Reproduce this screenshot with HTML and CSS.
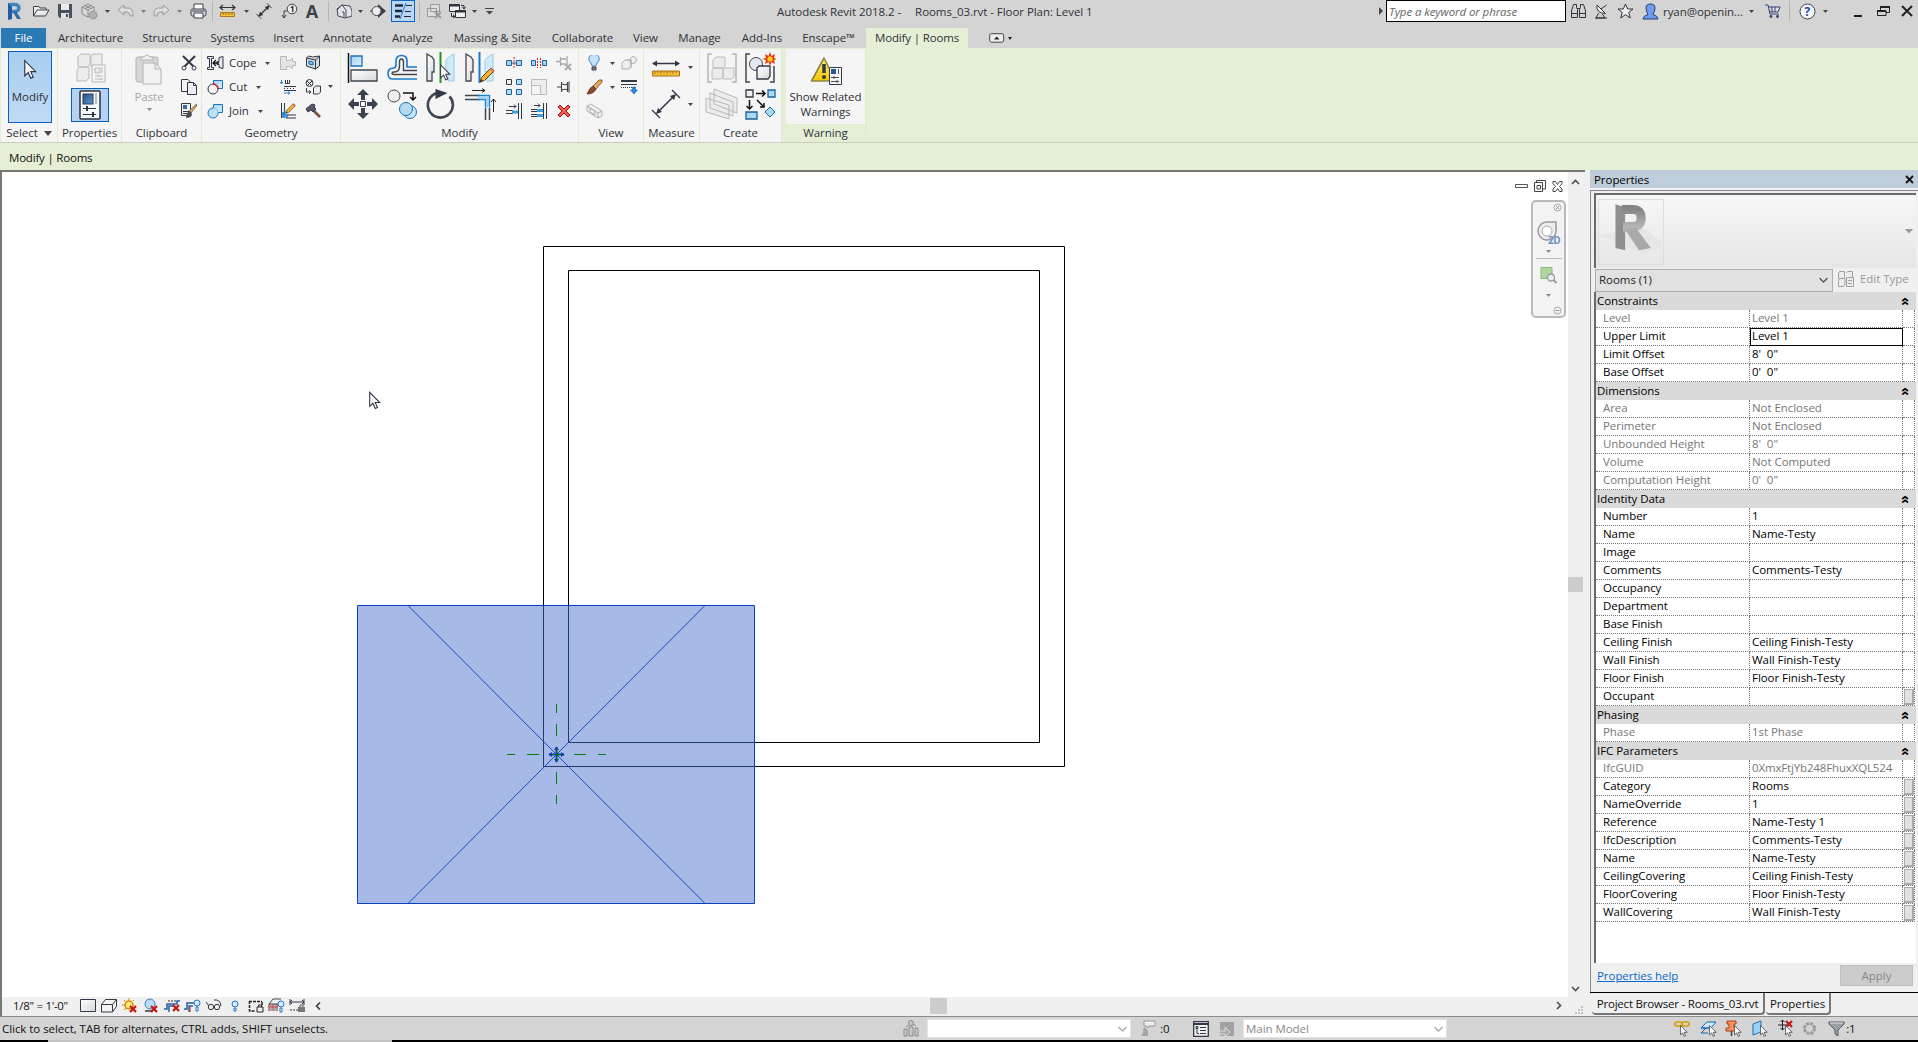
FILE: index.html
```html
<!DOCTYPE html>
<html lang="en">
<head>
<meta charset="utf-8">
<title>Autodesk Revit 2018.2 - Rooms_03.rvt - Floor Plan: Level 1</title>
<link rel="stylesheet" href="styles.css">
</head>
<body>
<svg class="defs" width="0" height="0">
  <defs>
    <linearGradient id="gBox" x1="0" y1="0" x2="1" y2="1"><stop offset="0" stop-color="#fff"/><stop offset="1" stop-color="#d5d8dd"/></linearGradient>
    <linearGradient id="gBlue" x1="0" y1="0" x2="1" y2="1"><stop offset="0" stop-color="#a4d3f0"/><stop offset="1" stop-color="#d8f0fb"/></linearGradient>
    <linearGradient id="gNavy" x1="0" y1="0" x2="1" y2="1"><stop offset="0" stop-color="#2a4d7c"/><stop offset="1" stop-color="#5d9bd0"/></linearGradient>
    <linearGradient id="gWarn" x1="0" y1="0" x2="0" y2="1"><stop offset="0" stop-color="#fff27a"/><stop offset="1" stop-color="#f5c400"/></linearGradient>
    <linearGradient id="gGrey" x1="0" y1="0" x2="0" y2="1"><stop offset="0" stop-color="#858585"/><stop offset="1" stop-color="#b5b5b5"/></linearGradient>
  </defs>
  <symbol id="caret" viewBox="0 0 5 3"><path d="M0 0h5L2.500 3z" fill="#444"/></symbol>
  <symbol id="ptr" viewBox="0 0 12 18"><path d="M.7.8v14l3.200-3 2.300 5.200 2.300-1-2.300-5h4.600z" fill="#fff" stroke="#333846" stroke-width="1.100"/></symbol>
  <symbol id="redx" viewBox="0 0 8 8"><path d="M1 1l6 6M7 1L1 7" stroke="#c41414" stroke-width="2.200"/></symbol>
  <symbol id="pencil" viewBox="0 0 16 16"><path d="M1 15l1.500-4.500L12 1l3 3-9.500 9.500z" fill="#f5b52a" stroke="#5a4020"/><path d="M11 2l3 3 1.500-1.500-3-3z" fill="#d06a5a"/><path d="M1 15l1-3 2 2z" fill="#333"/></symbol>
  <symbol id="pairs" viewBox="0 0 32 32"><g fill="#ececec" stroke="#b9b9b9"><path d="M4 5l3-3h9v10l-3 3H4zM17 5l2-3h9v10l-2 3h-9zM3 18l3-3h9v11l-3 3H3z"/><path d="M18 13h13v17H18z" fill="#f4f4f4"/><path d="M21 16h5v5h-5z"/><path d="M28 15v6M21 24h8M21 27h8M24 23v2M27 26v2"/></g></symbol>
</svg>

<div class="app">
  <header class="titlebar">
    <div class="qat">
      <svg width="18" height="20" viewBox="0 0 18 20"><path d="M3 2l4 1v15l-4 1z" fill="#1d5c9e"/><path d="M5 3.500h5a4 3.500 0 010 7H7" fill="none" stroke="#3f83c2" stroke-width="3.600"/><path d="M8 11l3-1 5 8h-4z" fill="#2b6cae"/></svg>
      <svg width="18" height="16" viewBox="0 0 18 16"><path d="M1.500 13V3.500H7l1 1.500h6v2" fill="#eee" stroke="#3c4048"/><path d="M1.500 13L5 7h12l-3.500 6z" fill="url(#gBox)" stroke="#3c4048"/></svg>
      <svg width="16" height="16" viewBox="0 0 16 16"><path d="M1 1h14v14H3l-2-2z" fill="#4a515d"/><path d="M4 1h8v6H4z" fill="#e8eaee"/><path d="M4 10h8v5H4z" fill="#dfe2e6"/><path d="M9 11h2v3H9z" fill="#4a515d"/></svg>
      <svg width="17" height="17" viewBox="0 0 17 17"><g fill="#d9d9d9" stroke="#8c8c8c"><path d="M1 4l6-3 6 3v7l-6 3-6-3z"/><path d="M1 4l6 3 6-3M7 7v7M4 2.500l6 3M10 2.500l-6 3"/></g><circle cx="12" cy="12" r="4" fill="#b0b0b0" stroke="#888" stroke-dasharray="2 1"/></svg>
      <svg class="caret"><use href="#caret"/></svg>
      <svg width="17" height="14" viewBox="0 0 17 14"><path d="M1 6l6-5v3h5q4 0 4 8h-3q0-4-3-4H7v3z" fill="#dedede" stroke="#999"/></svg>
      <svg class="caret dim"><use href="#caret"/></svg>
      <svg width="17" height="14" viewBox="0 0 17 14"><path d="M16 6l-6-5v3H5q-4 0-4 8h3q0-4 3-4h3v3z" fill="#dedede" stroke="#999"/></svg>
      <svg class="caret dim"><use href="#caret"/></svg>
      <svg width="17" height="16" viewBox="0 0 17 16"><path d="M4 6V1h9v5" fill="#fff" stroke="#3c4048"/><rect x="1" y="6" width="15" height="7" rx="1.500" fill="#d6d9de" stroke="#3c4048"/><path d="M4 10h9v5H4z" fill="#fff" stroke="#3c4048"/><path d="M2 8h13" stroke="#3c4048"/></svg>
      <i class="sep"></i>
      <svg width="17" height="14" viewBox="0 0 17 14"><path d="M1 3.500h15M4 1L1 3.500 4 6M13 1l3 2.500L13 6" fill="none" stroke="#333" stroke-width="1.200"/><path d="M1.500 8.500h14v4h-14z" fill="#f7c544" stroke="#b07a10"/><path d="M4 9v2M7 9v2M10 9v2M13 9v2" stroke="#8a5d08"/></svg>
      <svg class="caret"><use href="#caret"/></svg>
      <svg width="16" height="16" viewBox="0 0 16 16"><path d="M3 13L13 3" stroke="#333" stroke-width="1.300"/><path d="M2.500 13.500L4 8.800l3.200 3.200zM13.500 2.500L12 7.200 8.800 4z" fill="#333"/><path d="M.5 11l4.500 4.500M11 .5L15.500 5" stroke="#333"/></svg>
      <svg width="17" height="16" viewBox="0 0 17 16"><circle cx="11" cy="6" r="4.800" fill="#eee" stroke="#3c4048"/><text x="9" y="9" class="tiny">1</text><path d="M6 8H3v7M1 12l2 3 2-3" fill="none" stroke="#3c4048"/></svg>
      <b class="bigA">A</b>
      <i class="sep"></i>
      <svg width="16" height="16" viewBox="0 0 16 16"><path d="M1 6l5-4 8 1 2 5v5l-7 2-7-2z" fill="#e2e4e8" stroke="#454a55"/><path d="M1 7l5-5 4 5v8M6 9h2v5" fill="none" stroke="#454a55"/></svg>
      <svg class="caret"><use href="#caret"/></svg>
      <svg width="17" height="16" viewBox="0 0 17 16"><path d="M8 1l8 7-8 7z" fill="#3c4048"/><circle cx="6.500" cy="8" r="4.500" fill="#eee" stroke="#3c4048"/><path d="M0 8h2" stroke="#3c4048"/></svg>
      <span class="thin"><svg width="20" height="18" viewBox="0 0 20 18"><path d="M2 3.500h8M2 9h7M2 14.500h5" stroke="#222833" stroke-width="2.500"/><path d="M13 3.500h6M12 9.500h6M11 14.500h7" stroke="#222833"/><path d="M13 1L7 17" stroke="#1979ce"/></svg></span>
      <i class="sep"></i>
      <svg width="16" height="16" viewBox="0 0 16 16"><path d="M4.500 1.500h9v7h-9zM1.500 5.500h9v8h-9z" fill="#ddd" stroke="#999"/><path d="M9 9l6 6M15 9l-6 6" stroke="#999" stroke-width="2"/></svg>
      <svg width="17" height="16" viewBox="0 0 17 16"><path d="M.5 1.500h10v7H.5zM6.500 7.500h10v7h-10z" fill="#f2f2f2" stroke="#30343c"/><path d="M6 8.500h11M0 2.500h11" stroke="#30343c" stroke-width="2"/><path d="M12 2.500h3v3M13.500 4l1.500 2 1.500-2M2.500 10v3.500h3M4 12l2 1.500L4 15" fill="none" stroke="#30343c"/></svg>
      <svg class="caret"><use href="#caret"/></svg>
      <svg width="9" height="7" viewBox="0 0 9 7"><path d="M0 .5h9" stroke="#444"/><path d="M1 3h7L4.500 6.500z" fill="#444"/></svg>
    </div>
    <div class="wintitle"><span>Autodesk Revit 2018.2 -</span><span class="doc">Rooms_03.rvt - Floor Plan: Level 1</span></div>
    <div class="infocenter">
      <svg width="4" height="8" viewBox="0 0 4 8"><path d="M0 0l4 4-4 4z" fill="#444"/></svg>
      <div class="search">Type a keyword or phrase</div>
      <svg width="17" height="16" viewBox="0 0 17 16"><g fill="#d5d5d5" stroke="#30343c"><path d="M3.500 1.500h3v3l1 2v8h-6V8zM10.500 1.500h3L15.500 8v6.500h-6v-8l1-2z"/><path d="M7 5.500h3M1.500 10.500h6M9.500 10.500h6"/></g></svg>
      <svg width="16" height="16" viewBox="0 0 16 16"><path d="M4.500 10l-2.500 5h9l-2.500-4" fill="#ccc" stroke="#30343c"/><path d="M3 2q-1.500 8 8.500 8.500z" fill="#f5f5f5" stroke="#30343c"/><path d="M7 6l5.500-4M1 15h12" stroke="#30343c"/></svg>
      <svg width="17" height="16" viewBox="0 0 17 16"><path d="M8.500 1l2.200 5H16l-4.300 3.500 1.600 5.500-4.800-3.300L3.700 15l1.600-5.500L1 6h5.300z" fill="#eee" stroke="#30343c"/></svg>
      <svg width="17" height="17" viewBox="0 0 17 17"><path d="M1 16q0-3 5-4.500Q4 8 4 5q0-4 4.500-4T13 5q0 3-2 6.500 5 1.500 5 4.500z" fill="#6f9cf2" stroke="#2b3c6b"/></svg>
      <span class="user">ryan@openin...</span>
      <svg class="caret"><use href="#caret"/></svg>
      <svg width="17" height="16" viewBox="0 0 17 16"><path d="M1 2h3l2 9h9M4 4h12l-2 5H5.500" fill="#e0e4ee" stroke="#34406b"/><path d="M8 4v5M11 4v5" stroke="#34406b"/><circle cx="7" cy="13.500" r="1.400" fill="#34406b"/><circle cx="13.500" cy="13.500" r="1.400" fill="#34406b"/></svg>
      <i class="sep"></i>
      <svg width="17" height="17" viewBox="0 0 17 17"><circle cx="8.500" cy="8.500" r="7.500" fill="#f3f5f9" stroke="#40454f"/><text x="5.500" y="13" class="help">?</text></svg>
      <svg class="caret"><use href="#caret"/></svg>
      <svg class="min" width="8" height="12" viewBox="0 0 8 12"><path d="M0 11h8" stroke="#222" stroke-width="2"/></svg>
      <svg width="13" height="12" viewBox="0 0 13 12"><path d="M3.500 5V1.500h9v6H9M.5 5.500H9v5H.5z" fill="none" stroke="#222"/><path d="M3 2h10M0 6h9" stroke="#222" stroke-width="2"/></svg>
      <svg width="12" height="12" viewBox="0 0 12 12"><path d="M1 1l10 10M11 1L1 11" stroke="#222" stroke-width="2"/></svg>
    </div>
  </header>

  <nav class="tabs">
    <span class="file">File</span><span>Architecture</span><span>Structure</span><span>Systems</span><span>Insert</span><span>Annotate</span><span>Analyze</span><span>Massing &amp; Site</span><span>Collaborate</span><span>View</span><span>Manage</span><span>Add-Ins</span><span class="last">Enscape™</span><span class="active">Modify | Rooms</span>
    <svg width="24" height="10" viewBox="0 0 24 10"><rect x=".7" y=".7" width="14" height="8.500" rx="2" fill="#eee" stroke="#444"/><path d="M5 6.500h5.500L7.700 3.500z" fill="#222"/><path d="M19 4h4l-2 3z" fill="#222"/></svg>
  </nav>

  <div class="ribbon">
    <section class="panel p-select">
      <div class="body"><div class="modify"><svg width="13" height="21"><use href="#ptr"/></svg><span>Modify</span></div></div>
      <div class="label">Select <svg width="8" height="5" viewBox="0 0 8 5"><path d="M0 0h8L4 5z" fill="#444"/></svg></div>
    </section>
    <section class="panel p-props">
      <div class="body">
        <svg width="32" height="32"><use href="#pairs"/></svg>
        <span class="on"><svg width="22" height="30" viewBox="0 0 22 30"><rect x="1" y="1" width="20" height="28" rx="1" fill="#f7f8fa" stroke="#2d3340" stroke-width="1.500"/><rect x="4" y="4" width="10" height="10" fill="url(#gNavy)" stroke="#23395c"/><path d="M17 3v11" stroke="#b5b9c0" stroke-width="2"/><path d="M4 18.500h13M4 24.500h13" stroke="#2d3340"/><path d="M8 16v5M14 22v5" stroke="#2d3340" stroke-width="2"/></svg></span>
      </div>
      <div class="label">Properties</div>
    </section>
    <section class="panel p-clip">
      <div class="body">
        <div class="paste"><svg width="28" height="31" viewBox="0 0 28 31"><rect x="1" y="3" width="22" height="25" rx="2" fill="#d7d7d7" stroke="#b3b3b3"/><path d="M6 6V3h3q3-4 6 0h3v3z" fill="#eee" stroke="#b3b3b3"/><path d="M8 9h12l6 6v15H8z" fill="#f1f1f1" stroke="#b3b3b3"/><path d="M20 9v6h6" fill="none" stroke="#b3b3b3"/></svg><span>Paste</span><svg class="caret dim"><use href="#caret"/></svg></div>
        <div class="stack">
          <svg width="16" height="16" viewBox="0 0 16 16"><path d="M2 1l11 11M14 1L3 12" stroke="#333846" stroke-width="2"/><circle cx="3" cy="13" r="2" fill="#f5f5f5" stroke="#333846"/><circle cx="13" cy="13" r="2" fill="#f5f5f5" stroke="#333846"/></svg>
          <svg width="16" height="16" viewBox="0 0 16 16"><path d="M.5.500H7l3 3v9H.5z" fill="#f5f5f5" stroke="#333846"/><path d="M6.500 3.500h6l3 3v9h-9z" fill="#eceef1" stroke="#333846"/><path d="M12.500 3.500v3h3" fill="none" stroke="#333846"/></svg>
          <svg width="16" height="16" viewBox="0 0 16 16"><path d="M.5.500h9v12h-9z" fill="#f3f3f3" stroke="#333846"/><path d="M2 2h4v4H2z" fill="#3a6ba8"/><path d="M2 8.500h6M2 10.500h5" stroke="#333846"/><path d="M15.500 1L8 8l2 2 5.500-7z" fill="#e1ad6d" stroke="#61452a" stroke-width=".7"/><path d="M9 8q-4 1-4 7 6 0 6-4z" fill="#4d4f55"/></svg>
        </div>
      </div>
      <div class="label">Clipboard</div>
    </section>
    <section class="panel p-geom">
      <div class="body">
        <div class="stack text">
          <div><svg width="17" height="16" viewBox="0 0 17 16"><path d="M.5 1.500h6v2h-2v9h2v2h-6v-2h2v-9h-2zM16 1.500l-4 1v4h-2v3h2v3l4 1z" fill="#e5e7ea" stroke="#333846"/><path d="M12 8H6M9 5L6 8l3 3" fill="none" stroke="#111" stroke-width="1.300"/></svg><span>Cope</span><svg class="caret"><use href="#caret"/></svg></div>
          <div><svg width="17" height="16" viewBox="0 0 17 16"><path d="M6.500 1.500h9v8h-9z" fill="url(#gBlue)" stroke="#1c71b8"/><circle cx="6" cy="10" r="5" fill="#f5f5f5" stroke="#333846"/><path d="M6 5a5 5 0 015 5" fill="none" stroke="#f01818" stroke-width="1.500"/></svg><span>Cut</span><svg class="caret"><use href="#caret"/></svg></div>
          <div><svg width="17" height="16" viewBox="0 0 17 16"><path d="M6.500 1.500h9v8H11a5 5 0 11-4.500-4.500z" fill="url(#gBlue)" stroke="#1c71b8"/><path d="M6 5a5 5 0 015 5" fill="none" stroke="#8ac0e4"/></svg><span>Join</span><svg class="caret"><use href="#caret"/></svg></div>
        </div>
        <div class="stack">
          <svg width="16" height="16" viewBox="0 0 16 16"><path d="M.5 1.500h6v4h3l3-2v3h3v4h-3v3l-3-2h-3v3h-6z" fill="#e4e4e4" stroke="#b8b8b8"/></svg>
          <svg width="16" height="16" viewBox="0 0 16 16"><path d="M1.500 5V1M0 3l1.500 2L3 3M4 14h6M8 12.500l2 1.500-2 1.500" fill="none" stroke="#2488dd"/><path d="M5.500 1v3.500h4V1M7.500 1v3.500M4 7.500h12M4 11.500h12" fill="none" stroke="#333846"/><path d="M4 9.500h12" stroke="#333846" stroke-dasharray="1 2"/></svg>
          <svg width="16" height="16" viewBox="0 0 16 16"><path d="M1.500 0v15M4.500 0v6M6 15h10M7 12h9" fill="none" stroke="#333846"/><path d="M4.500 6v6h4M3 9v5h5" fill="none" stroke="#1979ce" stroke-width="1.500"/><use href="#pencil" x="5" y="0" width="11" height="11"/></svg>
        </div>
        <div class="stack">
          <svg width="16" height="16" viewBox="0 0 16 16"><path d="M1.500 3l2-2 4 1 7-1v10l-4 3-9-3z" fill="#d5d9df" stroke="#333846"/><path d="M1.500 3l9 2v9M10.500 5l4-4" fill="none" stroke="#333846"/><path d="M4 6l4 1v3l-4-1z" fill="#7dc4f3" stroke="#1465ac"/></svg>
          <svg width="16" height="16" viewBox="0 0 16 16"><circle cx="4.500" cy="4" r="3.500" fill="#eee" stroke="#333846"/><path d="M2 2l5 5M7 2L2 7M1.500 9v4h4M4 11.500l2 1.500-2 2" fill="none" stroke="#333846"/><path d="M8.500 9l2-2h5v6l-2 2h-5z" fill="#eee" stroke="#333846"/></svg>
          <svg width="16" height="16" viewBox="0 0 16 16"><path d="M7 6l8 8" stroke="#7e4b3c" stroke-width="2.600"/><path d="M1 6l6-5 3 1-1 2 2 2-3 3-2-2-3 2z" fill="#555a64" stroke="#333846"/></svg>
        </div>
        <svg class="caret mid"><use href="#caret"/></svg>
      </div>
      <div class="label">Geometry</div>
    </section>
    <section class="panel p-modify">
      <div class="body">
        <div class="large four">
          <svg width="32" height="32" viewBox="0 0 32 32"><path d="M1.500 1v30" stroke="#111" stroke-width="1.500"/><path d="M4 4h11v10H4z" fill="url(#gBlue)" stroke="#1c71b8" stroke-width="1.300"/><path d="M4 18h26v11H4z" fill="url(#gBox)" stroke="#40454f" stroke-width="1.300"/></svg>
          <svg width="32" height="32" viewBox="0 0 32 32"><path d="M31 27H7q-5 0-5-5.500T7.500 16q2.500 0 2.500-3V9q0-5.500 5.500-5.500T21 9v6h10" fill="none" stroke="#1979ce" stroke-width="1.600"/><path d="M31 22.500H8q-2 0-2-1.200t2-1.300q5.500 0 5.500-6V10q0-3 2-3t2 3v8.500H31" fill="none" stroke="#40454f" stroke-width="1.400"/></svg>
          <svg width="32" height="32" viewBox="0 0 32 32"><path d="M2 2l5 3 2 3v12H7v9H2z" fill="url(#gBox)" stroke="#40454f" stroke-width="1.300"/><path d="M29 2l-5 3-3 3v12h2v9h6z" fill="#cfeafa" stroke="#9acbe5"/><path d="M15.500 0v31" stroke="#1d9a1d" stroke-width="2"/><use href="#ptr" x="15" y="12" width="11" height="17"/></svg>
          <svg width="32" height="32" viewBox="0 0 32 32"><path d="M2 2l5 3 2 3v12H7v9H2z" fill="url(#gBox)" stroke="#40454f" stroke-width="1.300"/><path d="M29 2l-5 3-3 3v12h2v9h6z" fill="#cfeafa" stroke="#9acbe5"/><path d="M15.500 0v31" stroke="#1979ce" stroke-width="2"/><use href="#pencil" x="15" y="15" width="16" height="16"/></svg>
          <svg width="32" height="32" viewBox="0 0 32 32"><path d="M16 1l6 6h-4v5h-4V7h-4zM16 31l6-6h-4v-5h-4v5h-4zM1 16l6-6v4h5v4H7v4zM31 16l-6-6v4h-5v4h5v4z" fill="#3c4350"/><path d="M13.500 13.500h5v5h-5z" fill="#fff" stroke="#3c4350"/></svg>
          <svg width="32" height="32" viewBox="0 0 32 32"><circle cx="8" cy="8" r="6" fill="#eee" stroke="#40454f"/><path d="M17 5h10v6M24 9l3 3 3-3" fill="none" stroke="#111" stroke-width="1.500"/><circle cx="24" cy="24" r="6.500" fill="#c8e6f7" stroke="#1c71b8"/><circle cx="20" cy="21" r="6.500" fill="#b5dcf2" stroke="#1c71b8"/></svg>
          <svg width="32" height="32" viewBox="0 0 32 32"><path d="M24.500 8.500A12.500 12.500 0 1112 5" fill="none" stroke="#40454f" stroke-width="2.600"/><path d="M10.500 1l12 4-12 6z" fill="#333846"/></svg>
          <svg width="32" height="32" viewBox="0 0 32 32"><path d="M1 7.500h15M1 11.500h15M21.500 20v12M25.500 20v12" stroke="#40454f" stroke-width="1.500"/><path d="M14 7.500h11.500v12M14 11.500h7.500v8" fill="none" stroke="#1c83d8" stroke-width="1.400"/><path d="M14 9.500h9.500v10" fill="none" stroke="#9fd0f5" stroke-width="2.500"/><path d="M8 2.500h13M18 .5l3 2-3 2M29.500 24V11M27 14l2.500-3 2.500 3" fill="none" stroke="#222"/></svg>
        </div>
        <div class="small three">
          <svg width="16" height="16" viewBox="0 0 16 16"><path d="M.5 5.500h5v5h-5zM10.500 5.500h5v5h-5z" fill="#a6d5f1" stroke="#1b629d"/><path d="M5 8h6" stroke="#1b629d"/><path d="M8 2v12" stroke="#d22" stroke-dasharray="2 1"/></svg>
          <svg width="16" height="16" viewBox="0 0 16 16"><path d="M.5 5.500h4v5h-4zM11.500 5.500h4v5h-4z" fill="#a6d5f1" stroke="#1b629d"/><path d="M6.500 3v10M9.500 3v10" stroke="#d22" stroke-dasharray="2 1"/></svg>
          <svg width="16" height="16" viewBox="0 0 16 16"><path d="M0 6.500h4M4.500 2v9M5 4h5M5 9h5M11 1v9" fill="none" stroke="#aaa" stroke-width="1.300"/><path d="M9 9l6 6M15 9l-6 6" stroke="#aaa" stroke-width="2"/></svg>
          <svg width="16" height="16" viewBox="0 0 16 16"><path d="M.5.500h5v5h-5z" fill="#eee" stroke="#333846"/><path d="M10.500.500h5v5h-5zM.5 10.500h5v5h-5zM10.500 10.500h5v5h-5z" fill="#b5dcf5" stroke="#1b629d"/></svg>
          <svg width="16" height="16" viewBox="0 0 16 16"><path d="M.5.500h15v15h-15z" fill="#ededed" stroke="#bbb"/><path d="M.5 6.500h9v9h-9z" fill="#f5f5f5" stroke="#bbb"/></svg>
          <svg width="16" height="16" viewBox="0 0 16 16"><path d="M1 8h4M5.500 3v10M6 5q3 1.500 5.500 0M6 11q3-1.500 5.500 0M11.500 3v10M13 2.500v11" fill="none" stroke="#40454f" stroke-width="1.100"/></svg>
          <svg width="16" height="16" viewBox="0 0 16 16"><path d="M3 3.500h7M8 1.500l2 2-2 2M0 7.500h7M0 10.500h7M12.500 0v16M15.500 0v16" fill="none" stroke="#333846"/><path d="M6 9h6" stroke="#3d9de4" stroke-width="3"/></svg>
          <svg width="16" height="16" viewBox="0 0 16 16"><path d="M3 2.500h6M7 .5l2 2-2 2M0 6.500h6M0 8.500h6M0 11.500h6M0 13.500h6M12.500 0v16M15.500 0v16" fill="none" stroke="#333846"/><path d="M6 7.500h6M6 12.500h6" stroke="#3d9de4" stroke-width="3"/></svg>
          <svg width="14" height="14" viewBox="0 0 14 14"><path d="M3 1l4 4 4-4 2 2-4 4 4 4-2 2-4-4-4 4-2-2 4-4-4-4z" fill="#f25a50" stroke="#ab1111"/></svg>
        </div>
      </div>
      <div class="label">Modify</div>
    </section>
    <section class="panel p-view">
      <div class="body">
        <div class="small three">
          <svg width="14" height="17" viewBox="0 0 14 17"><path d="M5 11q0-2-2-4a5 5 0 118 0q-2 2-2 4z" fill="#c4e2fb" stroke="#4783bd"/><path d="M5 12h4v3H5z" fill="#777b85" stroke="#444"/></svg>
          <svg class="caret"><use href="#caret"/></svg>
          <svg width="17" height="16" viewBox="0 0 17 16"><g fill="#eee" stroke="#b0b0b0"><path d="M1 8l3-3h6v6l-2 3H1zM6 5h4v8M9 4l3-3 4 3-2 4-4 1z"/></g></svg>
          <svg width="17" height="16" viewBox="0 0 17 16"><path d="M16 1l-3 0-6 6 3 3 6-7z" fill="#e8a45e" stroke="#7c4a22" stroke-width=".8"/><path d="M7 7q-3 1-6 8 7 0 9-5z" fill="#8c4a2c" stroke="#4a2818" stroke-width=".7"/></svg>
          <svg class="caret"><use href="#caret"/></svg>
          <svg width="17" height="16" viewBox="0 0 17 16"><path d="M0 2h16" stroke="#333846" stroke-width="2"/><path d="M0 5.500h16" stroke="#333846"/><path d="M0 8.500h16" stroke="#333846" stroke-dasharray="1 1"/><path d="M11.500 8h3v3h2L13 15l-3.500-4h2z" fill="#2387e2" stroke="#1465ac" stroke-width=".6"/></svg>
          <svg width="17" height="16" viewBox="0 0 17 16"><path d="M1 3l4-2 11 7v5l-4 2-11-7zM1 3l11 7v5M12 10l4-2M4 5v4l5 3V8z" fill="#eee" stroke="#b0b0b0"/></svg>
        </div>
      </div>
      <div class="label">View</div>
    </section>
    <section class="panel p-measure">
      <div class="body"><div class="large two">
        <svg width="30" height="18" viewBox="0 0 30 18"><path d="M2 4.500h26" stroke="#333846" stroke-width="1.500"/><path d="M1 4.500l5-3v6zM29 4.500l-5-3v6z" fill="#333846"/><path d="M1.500 12h27v5h-27z" fill="#f5bd38" stroke="#a87412"/><path d="M4 12v3M7 12v2M10 12v3M13 12v2M16 12v3M19 12v2M22 12v3M25 12v2" stroke="#a87412"/></svg>
        <svg class="caret"><use href="#caret"/></svg>
        <svg width="30" height="30" viewBox="0 0 30 30"><path d="M6 24L24 6" stroke="#333846" stroke-width="1.600"/><path d="M5 25l2-6 4 4zM25 5l-2 6-4-4z" fill="#333846"/><path d="M1 21l8 8M21 1l8 8" stroke="#333846" stroke-width="1.300"/></svg>
        <svg class="caret"><use href="#caret"/></svg>
      </div></div>
      <div class="label">Measure</div>
    </section>
    <section class="panel p-create">
      <div class="body"><div class="large two">
        <svg width="32" height="32" viewBox="0 0 32 32"><path d="M6 2H2v28h4M26 2h4v28h-4" fill="none" stroke="#b5b5b5" stroke-width="1.500"/><g fill="#ececec" stroke="#bbb"><path d="M7 8l3-3h9v9l-2 2H7zM6 18l2-2h9v9l-2 2H6zM17 18l2-2h9v9l-2 2h-9z"/></g></svg>
        <svg width="32" height="32" viewBox="0 0 32 32"><path d="M6 2H2v28h4M26 30h4V14" fill="none" stroke="#40454f" stroke-width="1.500"/><circle cx="12" cy="12" r="6.500" fill="#e5e8ec" stroke="#40454f"/><path d="M13 16l2-2h11v10l-2 3H13z" fill="url(#gBox)" stroke="#333846" stroke-width="1.300"/><path d="M26 0l1.500 4L31 2l-1 4 3 1-3 1 1 4-3.500-2L26 14l-1.500-4L21 12l1-4-4-1 4-1-1-4 3.500 2z" fill="#e8330c"/><circle cx="26" cy="7" r="2.700" fill="#ffc91c"/></svg>
        <svg width="34" height="32" viewBox="0 0 34 32"><g fill="#ececec" stroke="#b8b8b8"><path d="M9 1l23 9v15L9 16zM5 5l23 9v14L5 20zM1 10l23 7v14L1 24z"/></g></svg>
        <svg width="32" height="32" viewBox="0 0 32 32"><path d="M2 2h7v7H2z" fill="#eee" stroke="#333846" stroke-width="1.300"/><path d="M24 2h7v7h-7zM2 24h11v7H2z" fill="#aad9f4" stroke="#1b629d" stroke-width="1.300"/><path d="M26 19l5 5-5 5-5-5z" fill="#aad9f4" stroke="#1b629d"/><path d="M12 5.500h9M18 2.500l3 3-3 3M5.500 12v9M2.500 18l3 3 3-3M13 12l7 7M20 15v4h-4" fill="none" stroke="#111" stroke-width="1.500"/></svg>
      </div></div>
      <div class="label">Create</div>
    </section>
    <section class="panel p-warn">
      <div class="body">
        <svg width="32" height="30" viewBox="0 0 32 30"><path d="M14 2L1.500 25h24z" fill="url(#gWarn)" stroke="#8f8642" stroke-width="1.600" stroke-linejoin="round"/><path d="M14 8v9" stroke="#333846" stroke-width="3.500"/><circle cx="14" cy="21" r="2" fill="#333846"/><path d="M19.500 11.500h12v17h-12z" fill="#f3f5f8" stroke="#333846"/><path d="M21 13h5v5h-5z" fill="#28599a"/><path d="M28.500 13v5M21 21.500h8M21 25.500h8M24 20v3M27 24v3" stroke="#555"/></svg>
        <span>Show Related<br>Warnings</span>
      </div>
      <div class="label">Warning</div>
    </section>
  </div>

  <div class="options">Modify | Rooms</div>

  <main class="work">
    <div class="viewport">
      <div class="sheet">
        <svg class="drawing" width="1566" height="825" viewBox="2 172 1566 825">
          <g fill="none" stroke="#000"><path d="M543.500 246.500h521v520h-521zM568.500 270.500h471v472h-471z"/></g>
          <rect x="357.500" y="605.500" width="397" height="298" fill="#a6b9e7"/>
          <path d="M543.500 605v161.500H754M568.500 605v137.500H754" fill="none" stroke="#253a6e"/>
          <g fill="none" stroke="#0a3fc0"><path d="M357.500 605.500h397v298h-397z"/><path d="M408 605.500l297 298M705 605.500l-297 298" stroke-width=".9"/></g>
          <g fill="none" stroke="#00800a"><path d="M556.500 704v9M556.500 724v12M556.500 772v12M556.500 795v9M507 754.500h8M527 754.500h12M574 754.500h12M598 754.500h8"/></g>
          <path d="M549 754.500h15M556.500 747v15" stroke="#0a3fc0" stroke-width="2"/><path d="M552 752v5l-3.500-2.500zM561 752v5l3.500-2.500zM554 750h5l-2.500-3.500zM554 759h5l-2.500 3.500z" fill="#0a3fc0"/>
          <path d="M552 754.500h10M556.500 748v13" stroke="#00700a"/>
          <use href="#ptr" x="369" y="391" width="12" height="19"/>
        </svg>
        <div class="mdi">
          <svg width="13" height="5" viewBox="0 0 13 5"><path d="M.5 .5h12v3H.5z" fill="none" stroke="#555"/></svg>
          <svg width="12" height="12" viewBox="0 0 12 12"><path d="M2.500 3V.5h9V9H9M.5 2.500h8v9h-8zM3 5.500h3.500V9H3z" fill="none" stroke="#444"/></svg>
          <svg width="11" height="11" viewBox="0 0 11 11"><path d="M1 .5h2.500l2 3 2-3H10v2.300L7.500 5.500 10 8v2.500H7.500l-2-3-2 3H1V8l2.500-2.500L1 2.800z" fill="none" stroke="#444"/></svg>
        </div>
        <div class="navbar">
          <svg width="9" height="9" viewBox="0 0 9 9"><circle cx="4.500" cy="4.500" r="3.500" fill="none" stroke="#aaa"/><path d="M3 3l3 3M6 3L3 6" stroke="#999"/></svg>
          <svg width="26" height="24" viewBox="0 0 26 24"><path d="M11 1h9v10a9 9 0 11-9-10z" fill="#eee" stroke="#999" stroke-width="1.500"/><circle cx="11" cy="10" r="5" fill="#fff" stroke="#aaa"/><text x="12" y="22.500" class="twod">2D</text></svg>
          <svg class="caret dim"><use href="#caret"/></svg>
          <i></i>
          <svg width="18" height="17" viewBox="0 0 18 17"><path d="M1 .5h11v11H1z" fill="#b0d79b" stroke="#8fb57c"/><circle cx="11" cy="10.500" r="3.500" fill="#e8eef3" stroke="#999" stroke-width="1.300"/><path d="M13.500 13l3 3" stroke="#999" stroke-width="2"/></svg>
          <svg class="caret dim"><use href="#caret"/></svg>
          <svg width="9" height="9" viewBox="0 0 9 9"><circle cx="4.500" cy="4.500" r="3.500" fill="none" stroke="#aaa"/><path d="M2.500 4.500h4" stroke="#999"/></svg>
        </div>
      </div>
      <div class="vscroll">
        <svg width="9" height="6" viewBox="0 0 9 6"><path d="M1 5l3.500-3.500L8 5" fill="none" stroke="#505050" stroke-width="1.700"/></svg>
        <b></b>
        <svg width="9" height="6" viewBox="0 0 9 6"><path d="M1 1l3.500 3.500L8 1" fill="none" stroke="#505050" stroke-width="1.700"/></svg>
      </div>
      <div class="viewbar">
        <span class="scale">1/8" = 1'-0"</span>
        <svg width="17" height="13" viewBox="0 0 17 13"><path d="M.5.500h15v12H.5z" fill="url(#gBox)" stroke="#333846"/></svg>
        <svg width="16" height="14" viewBox="0 0 16 14"><path d="M.5 5.500l4-5h11v7l-4 5.500H.5zM.5 5.500h11v7M11.500 5.500l4-5" fill="#f3f3f3" stroke="#333846"/></svg>
        <svg width="16" height="16" viewBox="0 0 16 16"><circle cx="7" cy="7" r="4" fill="#ffe478" stroke="#d18b00" stroke-width="1.500"/><path d="M7 0v2M0 7h2M2 2l1.500 1.500M12 2l-1 1M2 12l2-2" stroke="#d18b00"/><use href="#redx" x="7" y="7" width="8" height="8"/></svg>
        <svg width="16" height="16" viewBox="0 0 16 16"><circle cx="7" cy="6" r="5" fill="#b8dcf7" stroke="#3f7fb9"/><path d="M2 13h7" stroke="#666" stroke-width="2"/><use href="#redx" x="7" y="7" width="8" height="8"/></svg>
        <svg width="17" height="14" viewBox="0 0 17 14"><path d="M0 10h3V5h10V2h3M5 13V7h4" fill="none" stroke="#285da3" stroke-width="1.500"/><path d="M4 2h9" stroke="#333" stroke-dasharray="2 1"/><use href="#redx" x="8" y="5" width="8" height="8"/></svg>
        <svg width="17" height="15" viewBox="0 0 17 15"><path d="M0 11h3V5h8M5 14V8h4" fill="none" stroke="#285da3" stroke-width="1.500"/><path d="M6 8v6" stroke="#c22"/><circle cx="13" cy="5" r="3" fill="#d4ecff" stroke="#2274c5"/><path d="M12 9h2v4h-2z" fill="#fff" stroke="#2274c5"/></svg>
        <svg width="17" height="13" viewBox="0 0 17 13"><path d="M1 3l3 4M9 1q6-1 7 6" fill="none" stroke="#333846"/><circle cx="6" cy="8" r="2.700" fill="#eee" stroke="#333846"/><circle cx="12" cy="8" r="2.700" fill="#eee" stroke="#333846"/></svg>
        <svg width="8" height="12" viewBox="0 0 8 12"><circle cx="4" cy="4" r="3" fill="#d4ecff" stroke="#2274c5"/><path d="M3 8h2v3H3z" fill="#fff" stroke="#2274c5"/></svg>
        <svg width="16" height="14" viewBox="0 0 16 14"><path d="M1 2.500h13M1.500 2v10h6M14 3v3" fill="none" stroke="#222" stroke-width="1.500" stroke-dasharray="3 1"/><path d="M9 8h6v5H9zM10.500 8V6h3v2" fill="none" stroke="#222"/></svg>
        <svg width="17" height="15" viewBox="0 0 17 15"><path d="M1 6l4-5h8M1 6v7M5 6v7M9 6v7M1 6h9" fill="none" stroke="#444"/><path d="M1 9h9M3 6v7M7 6v7" stroke="#c44"/><circle cx="13" cy="6" r="3" fill="#d4ecff" stroke="#2274c5"/><path d="M12 10h2v4h-2z" fill="#fff" stroke="#2274c5"/></svg>
        <svg width="17" height="14" viewBox="0 0 17 14"><path d="M1 0v6M15 0v6M1 3h14M3 1L1 3l2 2M13 1l2 2-2 2" fill="none" stroke="#333846"/><path d="M1 11h8" stroke="#333846" stroke-dasharray="2 1"/><path d="M9 8h7v5H9z" fill="#777"/><path d="M11 8V6h3v2" fill="none" stroke="#555"/></svg>
        <svg width="6" height="8" viewBox="0 0 6 8"><path d="M5 .5L1.500 4 5 7.500" fill="none" stroke="#444" stroke-width="1.700"/></svg>
        <b class="hthumb"></b>
        <svg class="right" width="6" height="9" viewBox="0 0 6 9"><path d="M1 1l3.500 3.500L1 8" fill="none" stroke="#505050" stroke-width="1.700"/></svg>
        <svg class="grip" width="9" height="9" viewBox="0 0 9 9"><path d="M7 1h2v2H7zM7 4h2v2H7zM7 7h2v2H7zM4 4h2v2H4zM4 7h2v2H4zM1 7h2v2H1z" fill="#c2c2c2"/></svg>
      </div>
    </div>

    <aside class="props">
      <div class="ptitle">Properties<svg width="9" height="9" viewBox="0 0 9 9"><path d="M1 1l7 7M8 1L1 8" stroke="#111" stroke-width="1.800"/></svg></div>
      <div class="pframe">
        <div class="ptype">
          <span class="thumb"><svg width="62" height="60" viewBox="1 2 57 56"><path d="M0 33l40-8 18 14v6L40 50 0 33z" fill="#e6e6e6"/><path d="M15 4l9 3v40l-9-2z" fill="#8f8f8f"/><path d="M21 9h10q8 0 8 8t-8 8h-9" fill="none" stroke="url(#gGrey)" stroke-width="8.500"/><path d="M24 28l10-2 14 19-11 2z" fill="#a9a9a9"/></svg></span>
          <svg width="8" height="5" viewBox="0 0 8 5"><path d="M0 0h8L4 4.500z" fill="#999"/></svg>
        </div>
        <div class="pfilter">
          <div class="combo">Rooms (1)<svg width="9" height="6" viewBox="0 0 9 6"><path d="M.5 1l4 4 4-4" fill="none" stroke="#555" stroke-width="1.300"/></svg></div>
          <div class="edit"><svg width="17" height="16" viewBox="0 0 17 16"><path d="M.5 2l1-1.500h5V6L5 7.500H.5zM8.500 2l1-1.500h5V6M.5 9.500L2 7.500h5V13l-1.500 2.500h-5zM8.500 6.500h7v9h-7z" fill="#ececec" stroke="#a0a0a0"/><path d="M10 9.500h4M10 12.500h4" stroke="#a0a0a0"/></svg>Edit Type</div>
        </div>
        <div class="grid">
          <div class="head">Constraints<b>»</b></div>
          <div class="row ro"><span>Level</span><span>Level 1</span><span></span></div>
          <div class="row sel"><span>Upper Limit</span><span>Level 1</span><span></span></div>
          <div class="row"><span>Limit Offset</span><span>8'&nbsp; 0"</span><span></span></div>
          <div class="row"><span>Base Offset</span><span>0'&nbsp; 0"</span><span></span></div>
          <div class="head">Dimensions<b>»</b></div>
          <div class="row ro"><span>Area</span><span>Not Enclosed</span><span></span></div>
          <div class="row ro"><span>Perimeter</span><span>Not Enclosed</span><span></span></div>
          <div class="row ro"><span>Unbounded Height</span><span>8'&nbsp; 0"</span><span></span></div>
          <div class="row ro"><span>Volume</span><span>Not Computed</span><span></span></div>
          <div class="row ro"><span>Computation Height</span><span>0'&nbsp; 0"</span><span></span></div>
          <div class="head">Identity Data<b>»</b></div>
          <div class="row"><span>Number</span><span>1</span><span></span></div>
          <div class="row"><span>Name</span><span>Name-Testy</span><span></span></div>
          <div class="row"><span>Image</span><span></span><span></span></div>
          <div class="row"><span>Comments</span><span>Comments-Testy</span><span></span></div>
          <div class="row"><span>Occupancy</span><span></span><span></span></div>
          <div class="row"><span>Department</span><span></span><span></span></div>
          <div class="row"><span>Base Finish</span><span></span><span></span></div>
          <div class="row"><span>Ceiling Finish</span><span>Ceiling Finish-Testy</span><span></span></div>
          <div class="row"><span>Wall Finish</span><span>Wall Finish-Testy</span><span></span></div>
          <div class="row"><span>Floor Finish</span><span>Floor Finish-Testy</span><span></span></div>
          <div class="row"><span>Occupant</span><span></span><span class="btn"></span></div>
          <div class="head">Phasing<b>»</b></div>
          <div class="row ro"><span>Phase</span><span>1st Phase</span><span></span></div>
          <div class="head">IFC Parameters<b>»</b></div>
          <div class="row ro"><span>IfcGUID</span><span class="guid">0XmxFtjYb248FhuxXQL524</span><span></span></div>
          <div class="row"><span>Category</span><span>Rooms</span><span class="btn"></span></div>
          <div class="row"><span>NameOverride</span><span>1</span><span class="btn"></span></div>
          <div class="row"><span>Reference</span><span>Name-Testy 1</span><span class="btn"></span></div>
          <div class="row"><span>IfcDescription</span><span>Comments-Testy</span><span class="btn"></span></div>
          <div class="row"><span>Name</span><span>Name-Testy</span><span class="btn"></span></div>
          <div class="row"><span>CeilingCovering</span><span>Ceiling Finish-Testy</span><span class="btn"></span></div>
          <div class="row"><span>FloorCovering</span><span>Floor Finish-Testy</span><span class="btn"></span></div>
          <div class="row"><span>WallCovering</span><span>Wall Finish-Testy</span><span class="btn"></span></div>
        </div>
        <div class="pfoot"><a>Properties help</a><span class="apply">Apply</span></div>
      </div>
      <div class="ptabs"><span class="pb">Project Browser - Rooms_03.rvt</span><span class="pp">Properties</span></div>
    </aside>
  </main>

  <footer class="status">
    <span class="hint">Click to select, TAB for alternates, CTRL adds, SHIFT unselects.</span>
    <svg class="team" width="16" height="17" viewBox="0 0 16 17"><g fill="#c9c9c9" stroke="#8c8c8c"><circle cx="8" cy="3" r="2.500"/><path d="M1 16V9h3v7zM12 16V8h3v8zM6 16V7h4v9z"/><path d="M3 7l3-2M13 6l-3-2"/></g></svg>
    <div class="drop"><svg width="9" height="6" viewBox="0 0 9 6"><path d="M.5 1l4 4 4-4" fill="none" stroke="#aaa" stroke-width="1.300"/></svg></div>
    <svg class="edits" width="16" height="17" viewBox="0 0 16 17"><path d="M4 1h11v5H9L8 8l-1-2H4z" fill="#eee" stroke="#999"/><path d="M5 7l3 4v5H1q3-3 2-7z" fill="#a5a5a5"/></svg>
    <span class="zero">:0</span>
    <svg class="opt" width="16" height="16" viewBox="0 0 16 16"><path d="M.7.7h14.600v14.600H.7z" fill="#eef0f3" stroke="#333846" stroke-width="1.300"/><path d="M1 3h14" stroke="#333846" stroke-width="2"/><path d="M3 5.500h2v2H3zM7 6.500h6M7 9.500h6M7 12.500h6M4 8v4.500h2" fill="none" stroke="#333846"/></svg>
    <svg class="opt2" width="16" height="16" viewBox="0 0 16 16"><path d="M1 1h14v14H1z" fill="#a2a2a2"/><path d="M0 10h6V6l5 5-5 5v-3H0z" fill="#aaa" stroke="#ddd"/></svg>
    <div class="drop model">Main Model<svg width="9" height="6" viewBox="0 0 9 6"><path d="M.5 1l4 4 4-4" fill="none" stroke="#aaa" stroke-width="1.300"/></svg></div>
    <div class="toggles">
      <svg width="17" height="17" viewBox="0 0 17 17"><rect x="1" y="2" width="7" height="4" rx="2" fill="none" stroke="#d59b00" stroke-width="1.600"/><rect x="8" y="2" width="7" height="4" rx="2" fill="none" stroke="#d59b00" stroke-width="1.600"/><use href="#ptr" x="6" y="5" width="8" height="12"/></svg>
      <svg width="17" height="17" viewBox="0 0 17 17"><path d="M1 8l6-6h9l-5 6zM1 13l5-5M1 13h7M1 8h9" fill="#cfeaff" stroke="#1b62aa"/><use href="#ptr" x="9" y="5" width="8" height="12"/></svg>
      <svg width="17" height="17" viewBox="0 0 17 17"><path d="M2 1h9v3H9v4h3v3H1V8h3V4H2z" fill="#f59461" stroke="#a73e12"/><path d="M6.500 11v5" stroke="#444" stroke-width="1.500"/><use href="#ptr" x="9" y="5" width="8" height="12"/></svg>
      <svg width="17" height="17" viewBox="0 0 17 17"><path d="M2 4l8-3v11l-8 3z" fill="#9bd2f7" stroke="#1b71b9"/><use href="#ptr" x="9" y="5" width="8" height="12"/></svg>
      <svg width="17" height="17" viewBox="0 0 17 17"><path d="M1 5h9M5.500 0v10M3.500 2l2-2 2 2M3.500 8l2 2 2-2" fill="none" stroke="#222"/><use href="#redx" x="8" y="0" width="8" height="8"/><use href="#ptr" x="8" y="5" width="8" height="12"/></svg>
      <svg width="15" height="15" viewBox="0 0 15 15"><circle cx="7.500" cy="7.500" r="5" fill="none" stroke="#9a9a9a" stroke-width="3" stroke-dasharray="2.900 1"/></svg>
      <svg width="17" height="16" viewBox="0 0 17 16"><path d="M1 1h15v2l-6 6v6l-3-2V9L1 3z" fill="#9aa0a8" stroke="#555b64"/><path d="M2 2h13" stroke="#dfe3e8"/></svg>
      <span>:1</span>
    </div>
  </footer>
  <div class="edge"><i></i></div>
</div>
</body>
</html>
```
FILE: styles.css
```css
* { box-sizing: border-box; }
body { margin: 0; width: 1918px; height: 1042px; overflow: hidden; background: #d4d4d4; }
.defs { position: absolute; }
svg { display: block; flex: none; }
.app {
  width: 1918px; height: 1042px; display: flex; flex-direction: column;
  font-family: "Open Sans", "Noto Sans", sans-serif; font-size: 11.5px; letter-spacing: -0.05px;
  line-height: 16px; color: #2f3238; white-space: nowrap;
}
.caret { width: 5px; height: 3px; }
.dim { opacity: .6; }
.tiny { font: bold 8px "Open Sans", sans-serif; fill: #222; }
.help { font: bold 12px "Open Sans", sans-serif; fill: #1d4fa5; }
.twod { font: bold 10px "Open Sans", sans-serif; fill: #6b93c5; letter-spacing: -.5px; }
.sep { width: 1px; height: 20px; background: #b5b5b5; }

/* title bar */
.titlebar { height: 28px; display: flex; background: #d4d4d4; }
.qat {
  width: 500px; height: 22px; display: grid; align-items: center; justify-items: center;
  grid-template-columns: 28px 25px 24px 24px 12px 24px 12px 24px 12px 27px 1px 28px 10px 26px 24px 22px 10px 21px 13px 23px 26px 6px 24px 23px 10px 21px;
}
.bigA { font: bold 18px/22px "Open Sans", sans-serif; color: #3f434b; }
.thin { width: 24px; height: 22px; border: 1px solid #0a66c2; background: #b9d7f3; display: grid; place-items: center; }
.wintitle { width: 876px; padding: 4px 0 0 277px; display: flex; flex: none; }
.wintitle .doc { margin-left: 14px; }
.infocenter {
  width: 542px; height: 22px; flex: none; display: grid; align-items: center; justify-items: center;
  grid-template-columns: 10px 180px 24px 24px 23px 26px 81px 14px 28px 6px 30px 7px 42px 24px 23px;
}
.search { width: 180px; height: 22px; border: 1px solid #000; background: #fff; font-style: italic; color: #666; padding: 2px 2px; line-height: 17px; letter-spacing: -.1px; }
.user { justify-self: start; margin-top: 2px; }
.min { margin-left: 16px; }

/* ribbon tabs */
.tabs {
  height: 20px; display: grid; text-align: center; line-height: 19px; background: #d4d4d4; padding-left: 1px; align-items: stretch;
  grid-template-columns: 47px 85px 68px 63px 49px 69px 61px 99px 81px 45px 63px 62px 73px 102px 60px;
}
.tabs .file { background: #2a7ab5; color: #fff; margin-right: 2px; }
.tabs .last { padding-right: 2px; }
.tabs .active { background: #e5efd6; letter-spacing: -.15px; }
.tabs svg { align-self: center; margin-left: 21px; }

/* ribbon */
.ribbon { height: 95px; padding: 1px 0 0 1px; display: flex; background: #e5efd6; border-bottom: 1px solid #c9d0c0; }
.panel { height: 93px; border-right: 1px solid #e0ebd0; background: #f5f5f5; }
.body { height: 75px; display: flex; }
.label { height: 18px; display: flex; justify-content: center; align-items: center; gap: 6px; }
.p-select { width: 57px; } .p-props { width: 64px; } .p-clip { width: 80px; } .p-geom { width: 139px; }
.p-modify { width: 238px; } .p-view { width: 65px; } .p-measure { width: 56px; } .p-create { width: 82px; }
.p-warn { width: 80px; margin-left: 4px; }
.modify { width: 44px; height: 72px; margin: 2px 0 0 7px; border: 1px solid #0a5fc0; background: linear-gradient(#a9cdf0, #bfdaf4); display: flex; flex-direction: column; align-items: center; padding-top: 7px; }
.modify span { margin-top: 9px; }
.p-props .body { flex-direction: column; align-items: center; padding-top: 3px; }
.on { width: 38px; height: 34px; margin-top: 4px; border: 1px solid #0a5fc0; background: #b4d3f2; display: grid; place-items: center; }
.paste { width: 54px; display: flex; flex-direction: column; align-items: center; padding-top: 5px; color: #a5a5a5; }
.paste span { margin: 4px 0 3px; }
.stack { width: 25px; height: 72px; margin-top: 2px; display: grid; grid-template-rows: repeat(3, 24px); place-items: center; }
.stack.text { width: 73px; padding-left: 5px; justify-items: start; }
.stack.text div { display: flex; align-items: center; }
.stack.text span { margin: 0 9px 0 5px; }
.p-geom .caret.mid { align-self: center; margin-left: 3px; }
.large { display: grid; grid-template-rows: 37px 36px; place-items: center; }
.large.four { grid-template-columns: repeat(4, 39px); padding-left: 2px; }
.small { display: grid; grid-template-rows: repeat(3, 24px); place-items: center; margin-top: 2px; }
.p-modify .small { grid-template-columns: repeat(3, 25px); }
.p-modify .large { margin-right: 2px; }
.p-view .small { grid-template-columns: 30px 6px 29px; }
.p-measure .large { grid-template-columns: 43px 7px; }
.p-create .large { grid-template-columns: 43px 33px; }
.p-warn .body { flex-direction: column; align-items: center; padding-top: 7px; text-align: center; line-height: 15px; }
.p-warn .body span { margin-top: 3px; }
.p-warn .label { background: #e5efd6; }
.options { height: 27px; background: #e5efd6; padding: 7px 0 0 9px; color: #111; letter-spacing: -.2px; }

/* drawing view */
.work { height: 846px; display: flex; background: #f0f0f0; }
.viewport {
  width: 1585px; height: 846px; border: solid #777; border-width: 2px 0 0 2px; display: grid;
  grid-template-columns: 1566px 17px; grid-template-rows: 825px 19px; background: #f0f0f0;
}
.sheet { position: relative; background: #fff; }
.mdi { position: absolute; top: 8px; left: 1513px; display: flex; align-items: center; gap: 6px; }
.navbar { position: absolute; left: 1529px; top: 28px; width: 35px; height: 118px; border: 2px solid #b9b9b9; border-radius: 5px; background: #f3f3f3; display: flex; flex-direction: column; align-items: center; }
.navbar > :first-child, .navbar > :last-child { align-self: flex-end; margin: 0 2px; }
.navbar > :first-child { margin: 1px 2px 9px; }
.navbar i { width: 26px; height: 1px; background: #bbb; margin: 5px 0 8px; }
.navbar > :nth-child(3) { margin-top: 5px; }
.navbar > :nth-child(6) { margin: 10px 0 9px; }
.vscroll { display: flex; flex-direction: column; align-items: center; padding: 7px 2px 5px 0; }
.vscroll b { width: 15px; height: 15px; background: #cdcdcd; margin: 392px 0 auto; }
.viewbar {
  grid-column: 1 / 3; display: grid; align-items: center; justify-items: center; height: 16px; color: #111;
  grid-template-columns: 76px repeat(12, 20.900px) 600px 19px 1fr 16px 18px;
}
.scale { justify-self: start; padding-left: 11px; letter-spacing: -.3px; }
.hthumb { grid-column: 15; width: 17px; height: 16px; background: #cdcdcd; }
.viewbar .right { grid-column: 17; }
.viewbar .grip { margin: 8px 0 0 4px; }

/* properties palette */
.props { width: 328px; margin-left: 5px; color: #000; display: flex; flex-direction: column; }
.ptitle { height: 18px; background: #bfcddb; display: flex; justify-content: space-between; align-items: center; padding: 1px 4px 0 4px; }
.pframe { height: 802px; margin-top: 2px; border: solid #8a8a8a; border-width: 1px 0 0 1px; padding-left: 3px; background: #f0f0f0; }
.ptype { width: 322px; height: 75px; border: solid #696969; border-width: 2px 0 0 2px; margin-top: 2px; background: linear-gradient(#f7f7f7, #e6e6e6); display: flex; justify-content: space-between; align-items: center; padding: 0 3px 0 2px; }
.thumb { width: 66px; height: 66px; border: 1px solid #ddd; display: grid; place-items: center; }
.pfilter { height: 24px; display: flex; align-items: center; }
.combo { width: 238px; height: 23px; border: 1px solid #adadad; background: #e1e1e1; display: flex; align-items: center; justify-content: space-between; padding: 0 4px 0 3px; margin-left: 1px; color: #222; }
.edit { display: flex; align-items: center; gap: 5px; margin: -3px 0 0 5px; color: #999; }
.grid { width: 322px; height: 671px; background: #fff; border-left: 2px solid #696969; }
.head { height: 18px; background: #dadada; padding: 1px 6px 0 1px; display: flex; justify-content: space-between; }
.head b { transform: rotate(-90deg); font: bold 14px/14px "Open Sans", sans-serif; width: 10px; text-align: center; }
.row { height: 18px; display: grid; grid-template-columns: 154px 153px 12px; }
.row span { border: dotted #777; border-width: 0 1px 1px 0; padding-left: 2px; line-height: 16px; overflow: hidden; }
.row span:first-child { padding-left: 7px; }
.row .guid { letter-spacing: -.15px; }
.ro { color: #777; }
.sel span:nth-child(2) { border: 1px solid #000; padding-left: 1px; line-height: 14px; }
.row .btn { background: linear-gradient(#aaa, #aaa) 1px 1px / 10px 16px no-repeat, #fff; padding: 2px 1px 2px 2px; }
.row .btn::before { content: ""; display: block; width: 7px; height: 13px; background: #e1e1e1; }
.pfoot { height: 25px; display: flex; justify-content: space-between; align-items: center; padding: 0 5px 0 3px; }
.pfoot a { color: #0a66cc; text-decoration: underline; }
.apply { width: 73px; height: 21px; border: 1px solid #bfbfbf; background: #ccc; color: #888; text-align: center; line-height: 20px; }
.ptabs { height: 23px; display: flex; border-top: 1px solid #000; }
.ptabs span { height: 22px; text-align: center; line-height: 22px; border: solid #777; border-width: 0 2px 2px 0; border-radius: 0 0 4px 4px; color: #111; }
.ptabs .pb { width: 173px; margin-left: 2px; letter-spacing: -.2px; }
.ptabs .pp { width: 65px; margin-left: 1px; }

/* status bar */
.status { height: 24px; border-top: 1px solid #8c8c8c; background: #d4d4d4; display: flex; align-items: center; color: #111; }
.hint { width: 903px; padding-left: 2px; }
.drop { width: 204px; height: 19px; margin-left: 8px; background: #fff; border: 1px solid #e4e4e4; display: flex; align-items: center; justify-content: flex-end; padding: 0 2px; color: #888; }
.drop svg { margin-right: 1px; }
.model { justify-content: space-between; }
.edits { margin-left: 9px; }
.zero { width: 37px; padding-left: 4px; }
.opt2 { margin-left: 10px; }
.toggles { margin-left: 227px; display: grid; align-items: center; grid-template-columns: repeat(6, 25.700px) 18px auto; }
.edge { height: 2px; background: #000; padding-left: 48px; }
.edge i { display: block; width: 344px; height: 2px; background: #c4c4c4; }
```
